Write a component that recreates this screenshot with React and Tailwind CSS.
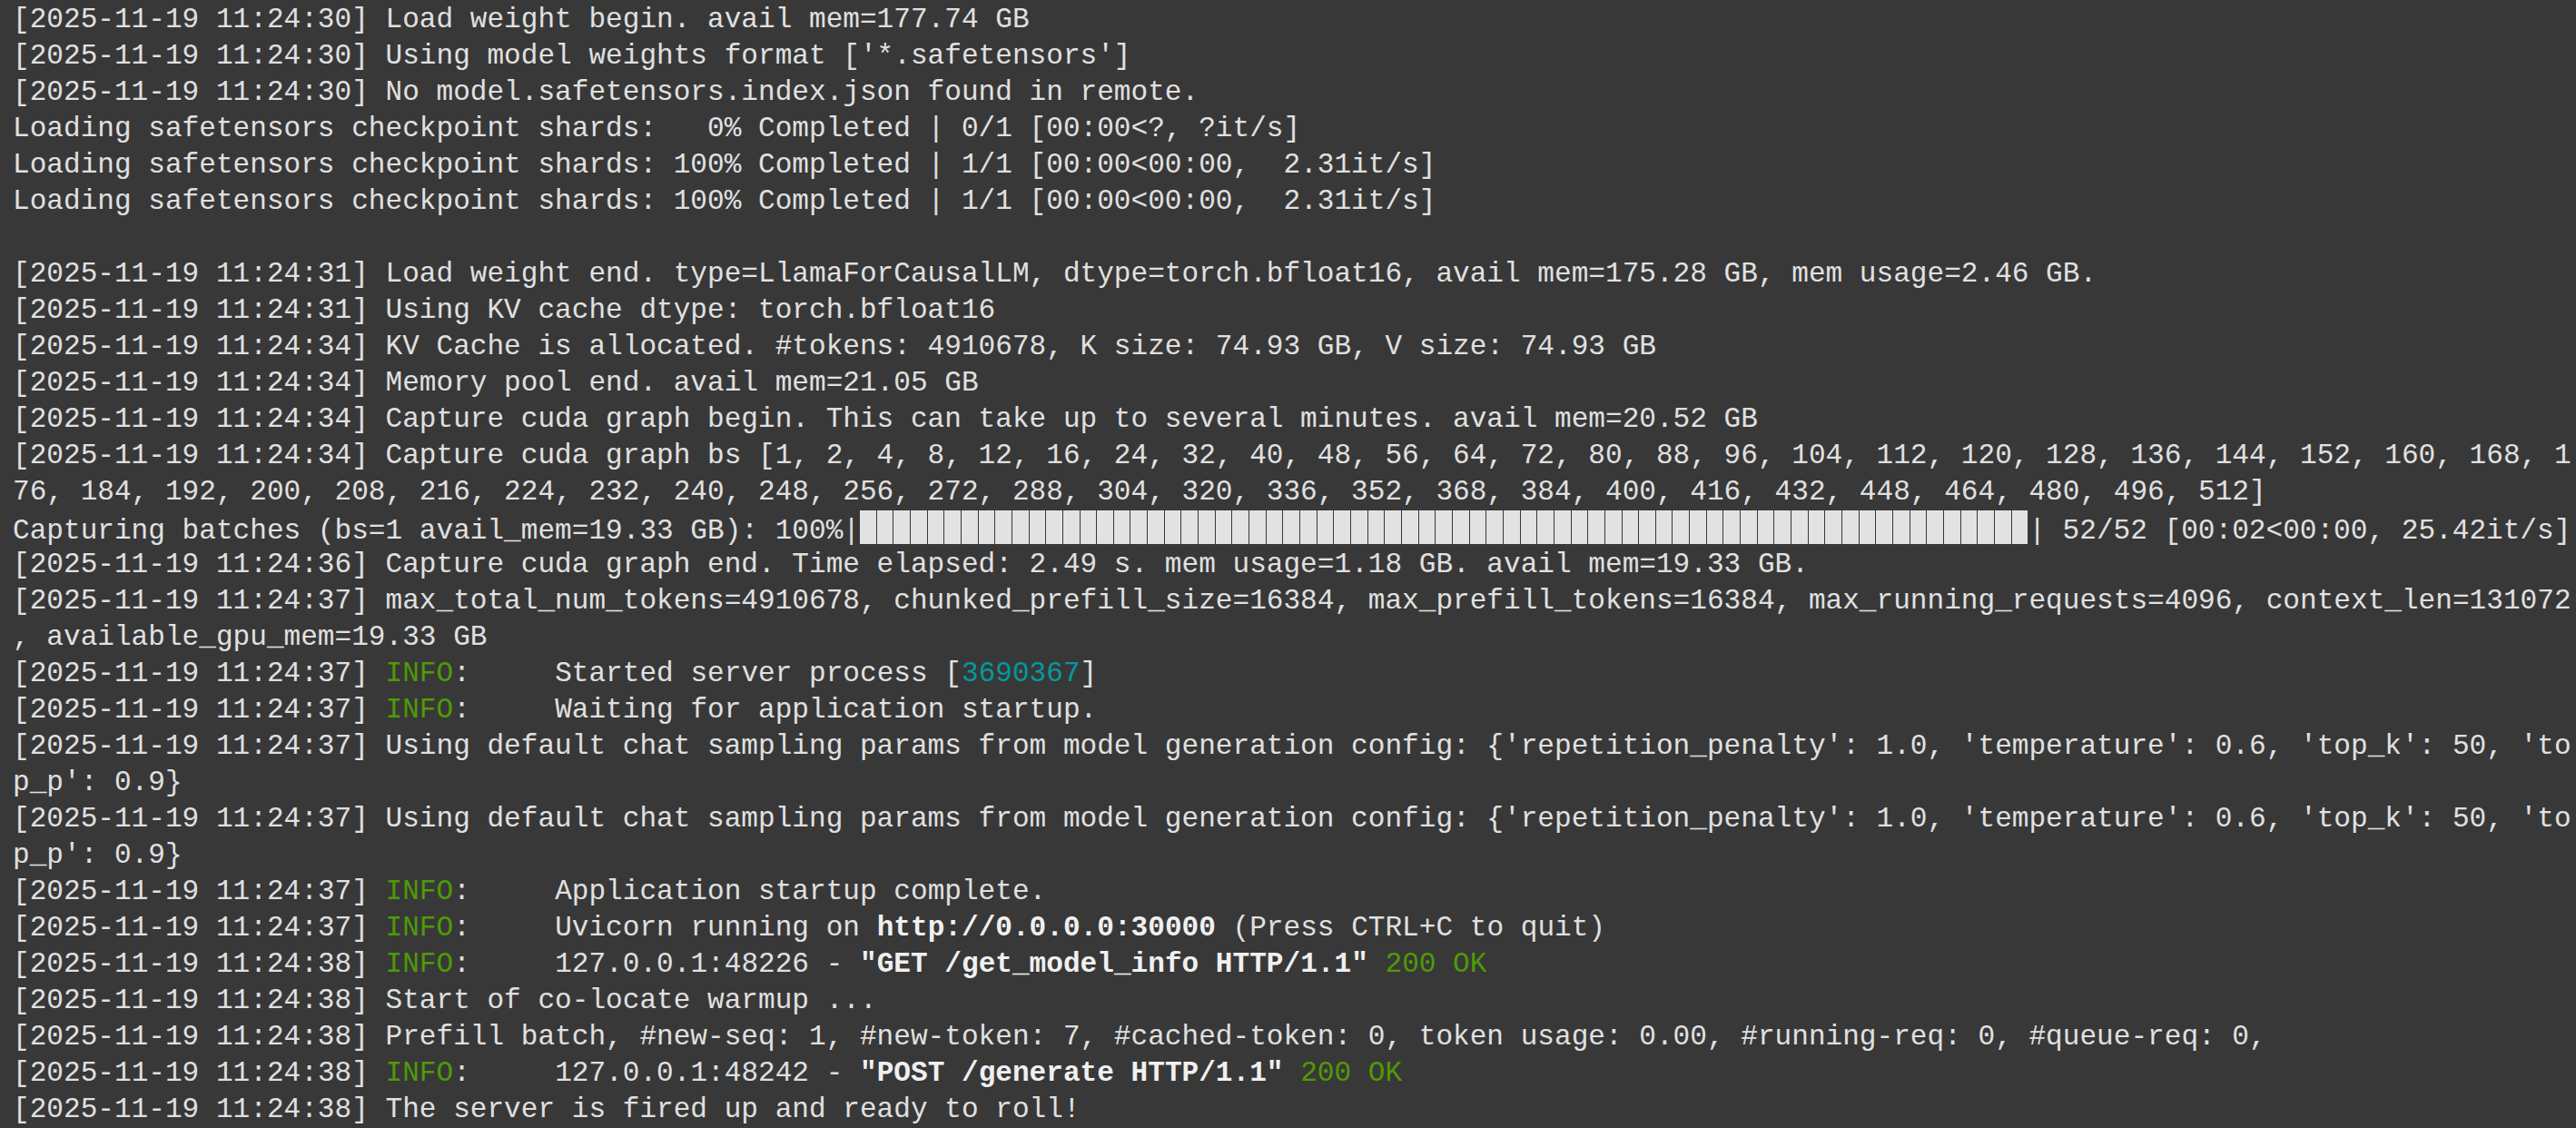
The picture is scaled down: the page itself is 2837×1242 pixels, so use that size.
import React from "react";

const G = ({ children }) => <span className="text-[#4e9a06]">{children}</span>;
const C = ({ children }) => <span className="text-[#06989a]">{children}</span>;
const B = ({ children }) => <span className="font-bold text-[#f0f0f0]">{children}</span>;

function Info({ ts, children }) {
  return (
    <>
      [{ts}] <G>INFO</G>:{"     "}
      {children}
    </>
  );
}

function ProgressBar({ cells }) {
  return (
    <span className="inline-flex h-[37px] align-[-6px]">
      {Array.from({ length: cells }).map((_, i) => (
        <span key={i} className="w-[1ch] h-full bg-[#e2e2e2] border-r border-[#383838]" />
      ))}
    </span>
  );
}

const samplingLine =
  "[2025-11-19 11:24:37] Using default chat sampling params from model generation config: {'repetition_penalty': 1.0, 'temperature': 0.6, 'top_k': 50, 'to";

export default function App() {
  const lines = [
    "[2025-11-19 11:24:30] Load weight begin. avail mem=177.74 GB",
    "[2025-11-19 11:24:30] Using model weights format ['*.safetensors']",
    "[2025-11-19 11:24:30] No model.safetensors.index.json found in remote.",
    "Loading safetensors checkpoint shards:   0% Completed | 0/1 [00:00<?, ?it/s]",
    "Loading safetensors checkpoint shards: 100% Completed | 1/1 [00:00<00:00,  2.31it/s]",
    "Loading safetensors checkpoint shards: 100% Completed | 1/1 [00:00<00:00,  2.31it/s]",
    " ",
    "[2025-11-19 11:24:31] Load weight end. type=LlamaForCausalLM, dtype=torch.bfloat16, avail mem=175.28 GB, mem usage=2.46 GB.",
    "[2025-11-19 11:24:31] Using KV cache dtype: torch.bfloat16",
    "[2025-11-19 11:24:34] KV Cache is allocated. #tokens: 4910678, K size: 74.93 GB, V size: 74.93 GB",
    "[2025-11-19 11:24:34] Memory pool end. avail mem=21.05 GB",
    "[2025-11-19 11:24:34] Capture cuda graph begin. This can take up to several minutes. avail mem=20.52 GB",
    "[2025-11-19 11:24:34] Capture cuda graph bs [1, 2, 4, 8, 12, 16, 24, 32, 40, 48, 56, 64, 72, 80, 88, 96, 104, 112, 120, 128, 136, 144, 152, 160, 168, 1",
    "76, 184, 192, 200, 208, 216, 224, 232, 240, 248, 256, 272, 288, 304, 320, 336, 352, 368, 384, 400, 416, 432, 448, 464, 480, 496, 512]",
    <>
      Capturing batches (bs=1 avail_mem=19.33 GB): 100%|<ProgressBar cells={69} />| 52/52 [00:02&lt;00:00, 25.42it/s]
    </>,
    "[2025-11-19 11:24:36] Capture cuda graph end. Time elapsed: 2.49 s. mem usage=1.18 GB. avail mem=19.33 GB.",
    "[2025-11-19 11:24:37] max_total_num_tokens=4910678, chunked_prefill_size=16384, max_prefill_tokens=16384, max_running_requests=4096, context_len=131072",
    ", available_gpu_mem=19.33 GB",
    <Info ts="2025-11-19 11:24:37">
      Started server process [<C>3690367</C>]
    </Info>,
    <Info ts="2025-11-19 11:24:37">Waiting for application startup.</Info>,
    samplingLine,
    "p_p': 0.9}",
    samplingLine,
    "p_p': 0.9}",
    <Info ts="2025-11-19 11:24:37">Application startup complete.</Info>,
    <Info ts="2025-11-19 11:24:37">
      Uvicorn running on <B>http://0.0.0.0:30000</B> (Press CTRL+C to quit)
    </Info>,
    <Info ts="2025-11-19 11:24:38">
      127.0.0.1:48226 - <B>"GET /get_model_info HTTP/1.1"</B> <G>200 OK</G>
    </Info>,
    "[2025-11-19 11:24:38] Start of co-locate warmup ...",
    "[2025-11-19 11:24:38] Prefill batch, #new-seq: 1, #new-token: 7, #cached-token: 0, token usage: 0.00, #running-req: 0, #queue-req: 0,",
    <Info ts="2025-11-19 11:24:38">
      127.0.0.1:48242 - <B>"POST /generate HTTP/1.1"</B> <G>200 OK</G>
    </Info>,
    "[2025-11-19 11:24:38] The server is fired up and ready to roll!",
  ];

  return (
    <div className="min-h-screen w-full bg-[#383838] pl-[14px] pt-[2px] text-[#e0e0e0] font-['Liberation_Mono',monospace] text-[31.1px] leading-[40px] overflow-hidden">
      {lines.map((line, i) => (
        <div key={i} className="whitespace-pre h-[40px]">
          {line}
        </div>
      ))}
    </div>
  );
}
